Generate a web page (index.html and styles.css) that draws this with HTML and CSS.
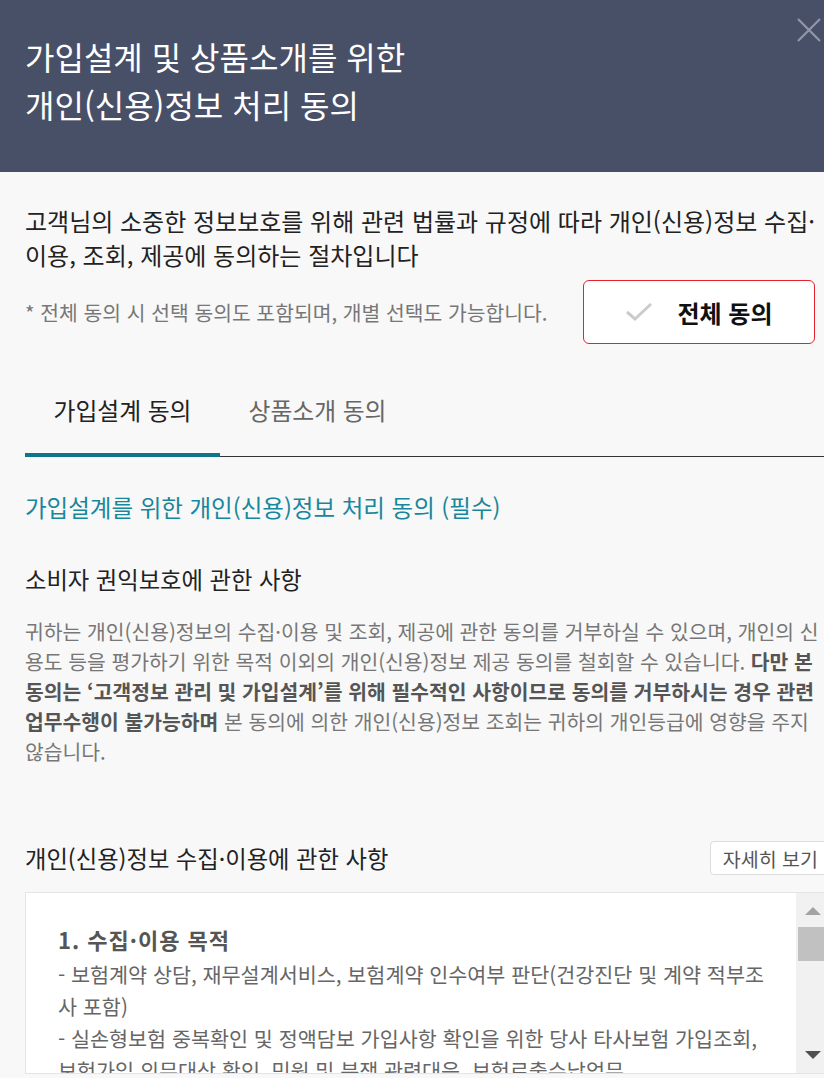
FILE: index.html
```html
<!DOCTYPE html>
<html lang="ko">
<head>
  <meta charset="UTF-8" />
  <meta name="viewport" content="width=device-width, initial-scale=1.0"/>
  <title>개인(신용)정보 처리 동의</title>
  <link rel="stylesheet" href="styles.css">
</head>
<body>
  <div class="modal">
    <header class="modal-head">
      <h1>가입설계 및 상품소개를 위한<br>개인(신용)정보 처리 동의</h1>
      <button class="close" aria-label="닫기">
        <svg width="24" height="24" viewBox="0 0 24 24"><path d="M1 1 L23 23 M23 1 L1 23" stroke="#9197a8" stroke-width="2.2" fill="none"/></svg>
      </button>
    </header>

    <div class="modal-body">
      <p class="intro">고객님의 소중한 정보보호를 위해 관련 법률과 규정에 따라 개인(신용)정보 수집·<br>이용, 조회, 제공에 동의하는 절차입니다</p>

      <div class="agree-row">
        <p class="note">* 전체 동의 시 선택 동의도 포함되며, 개별 선택도 가능합니다.</p>
        <button class="agree-all">
          <svg width="28" height="20" viewBox="0 0 28 20"><path d="M2 10 L10 17 L26 2" stroke="#cbcbcb" stroke-width="3" fill="none"/></svg>
          <span>전체 동의</span>
        </button>
      </div>

      <ul class="tabs">
        <li class="on">가입설계 동의</li>
        <li>상품소개 동의</li>
      </ul>

      <h2 class="sec-title">가입설계를 위한 개인(신용)정보 처리 동의 (필수)</h2>

      <h3 class="sub">소비자 권익보호에 관한 사항</h3>
      <p class="desc">귀하는 개인(신용)정보의 수집·이용 및 조회, 제공에 관한 동의를 거부하실 수 있으며, 개인의 신용도 등을 평가하기 위한 목적 이외의 개인(신용)정보 제공 동의를 철회할 수 있습니다. <strong>다만 본 동의는 ‘고객정보 관리 및 가입설계’를 위해 필수적인 사항이므로 동의를 거부하시는 경우 관련 업무수행이 불가능하며</strong> 본 동의에 의한 개인(신용)정보 조회는 귀하의 개인등급에 영향을 주지 않습니다.</p>

      <div class="sub-row">
        <h3 class="sub">개인(신용)정보 수집·이용에 관한 사항</h3>
        <button class="more">자세히 보기</button>
      </div>

      <div class="terms">
        <div class="terms-text">
          <p class="terms-head">1. 수집·이용 목적</p>
          <p>- 보험계약 상담, 재무설계서비스, 보험계약 인수여부 판단(건강진단 및 계약 적부조사 포함)</p>
          <p>- 실손형보험 중복확인 및 정액담보 가입사항 확인을 위한 당사 타사보험 가입조회, 보험가입 의무대상 확인, 민원 및 분쟁 관련대응, 보험료출수납업무</p>
          <p>- 보험금 지급·심사, 보험사고 조사(보험사기 조사 포함)</p>
        </div>
        <div class="scrollbar">
          <span class="arrow-up"></span>
          <span class="thumb"></span>
          <span class="arrow-down"></span>
        </div>
      </div>
    </div>
  </div>
</body>
</html>
```

FILE: styles.css
```css
html, body {
  margin: 0;
  padding: 0;
  overflow: hidden;
}

body {
  font-family: "Noto Sans CJK KR", "Noto Sans", sans-serif;
  background: #f8f8f8;
  color: #222;
}

p, h1, h2, h3, ul {
  margin: 0;
  padding: 0;
}

button {
  font-family: inherit;
  cursor: pointer;
}

.modal {
  width: 856px;
  background: #f8f8f8;
}

.modal-head {
  position: relative;
  background: #485068;
  height: 172px;
  box-sizing: border-box;
  padding: 32px 25px 0;
}

.modal-head h1 {
  color: #fff;
  font-size: 32px;
  font-weight: 400;
  line-height: 48px;
}

.close {
  position: absolute;
  top: 18px;
  left: 797px;
  width: 24px;
  height: 24px;
  padding: 0;
  border: none;
  background: none;
}

.modal-body {
  padding: 32px 25px 0;
}

.intro {
  font-size: 24px;
  line-height: 34px;
  color: #222;
  white-space: nowrap;
}

.agree-row {
  display: flex;
  align-items: center;
  justify-content: space-between;
  margin-top: 8px;
}

.note {
  font-size: 20.4px;
  color: #777;
}

.agree-all {
  display: flex;
  align-items: center;
  justify-content: center;
  gap: 24px;
  width: 232px;
  height: 64px;
  margin-right: 16px;
  padding: 0;
  background: #fff;
  border: 1px solid #e4232f;
  border-radius: 6px;
  font-size: 24px;
  font-weight: 700;
  color: #111;
}

.tabs {
  list-style: none;
  display: flex;
  margin-top: 26px;
  border-bottom: 1px solid #333;
}

.tabs li {
  width: 195px;
  text-align: center;
  font-size: 23.8px;
  line-height: 30px;
  padding: 25px 0 28px;
  color: #666;
}

.tabs li.on {
  color: #222;
  border-bottom: 4px solid #0f7688;
  margin-bottom: -1px;
}

.sec-title {
  margin-top: 35px;
  font-size: 23.5px;
  font-weight: 400;
  line-height: 30px;
  color: #17879b;
}

.sub {
  font-size: 23.3px;
  font-weight: 400;
  line-height: 30px;
  color: #222;
}

.sec-title + .sub {
  margin-top: 42px;
}

.desc {
  margin-top: 22px;
  font-size: 20.4px;
  line-height: 30px;
  color: #777;
}

.desc strong {
  color: #555;
}

.sub-row {
  display: flex;
  align-items: center;
  justify-content: space-between;
  margin-top: 75px;
}

.more {
  height: 34px;
  padding: 0 12px;
  background: #fff;
  border: 1px solid #ddd;
  border-radius: 4px;
  font-size: 19.5px;
  color: #555;
}

.terms {
  display: flex;
  height: 182px;
  margin-top: 17px;
  background: #fff;
  border: 1px solid #e4e4e4;
  box-sizing: border-box;
  overflow: hidden;
}

.terms-text {
  flex: 1;
  padding: 30px 30px 0 32px;
  font-size: 20.7px;
  line-height: 32px;
  color: #666;
}

.terms-head {
  font-size: 22px;
  letter-spacing: 1px;
  font-weight: 700;
  color: #555;
  margin-bottom: 3px;
}

.scrollbar {
  width: 34px;
  flex: none;
  display: flex;
  flex-direction: column;
  align-items: center;
  padding: 14px 0 14px;
  background: #f1f1f1;
}

.arrow-up {
  width: 0;
  height: 0;
  border-left: 8px solid transparent;
  border-right: 8px solid transparent;
  border-bottom: 8px solid #a3a3a3;
}

.thumb {
  align-self: flex-end;
  width: 32px;
  height: 34px;
  margin-top: 12px;
  background: #c1c1c1;
}

.arrow-down {
  width: 0;
  height: 0;
  margin-top: auto;
  border-left: 8px solid transparent;
  border-right: 8px solid transparent;
  border-top: 8px solid #505050;
}
```
